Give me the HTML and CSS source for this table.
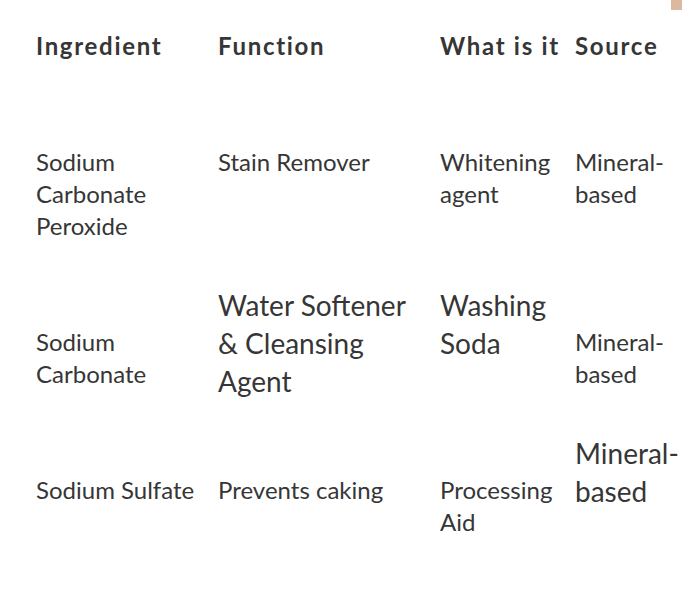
FILE: index.html
```html
<!DOCTYPE html>
<html lang="en">
<head>
<meta charset="utf-8">
<title>Ingredients</title>
<link rel="stylesheet" href="styles.css">
</head>
<body>
<div class="corner"></div>
<div class="table">
  <div class="row head">
    <div class="cell">Ingredient</div>
    <div class="cell">Function</div>
    <div class="cell">What is it</div>
    <div class="cell">Source</div>
  </div>
  <div class="row r1">
    <div class="cell">Sodium Carbonate Peroxide</div>
    <div class="cell">Stain Remover</div>
    <div class="cell">Whitening agent</div>
    <div class="cell">Mineral-based</div>
  </div>
  <div class="row r2">
    <div class="cell drop">Sodium Carbonate</div>
    <div class="cell big">Water Softener &amp; Cleansing Agent</div>
    <div class="cell big">Washing Soda</div>
    <div class="cell drop">Mineral-based</div>
  </div>
  <div class="row r3">
    <div class="cell drop">Sodium Sulfate</div>
    <div class="cell drop">Prevents caking</div>
    <div class="cell drop">Processing Aid</div>
    <div class="cell big">Mineral-based</div>
  </div>
</div>
</body>
</html>
```
FILE: styles.css
```css
html, body {
  margin: 0;
  padding: 0;
  background: #ffffff;
}
body {
  font-family: Lato, "Open Sans", sans-serif;
  color: #363636;
  width: 682px;
  overflow: hidden;
}
.corner {
  position: absolute;
  top: 0;
  right: 0;
  width: 11px;
  height: 10px;
  background: #dcb99e;
}
.table {
  padding-left: 36px;
}
.row {
  display: grid;
  grid-template-columns: 182px 222px 135px 109px;
  align-items: start;
  font-size: 24px;
  line-height: 32px;
}
.cell {
  padding-right: 14px;
}
.cell:nth-child(2) {
  padding-right: 24px;
}
.cell:nth-child(4) {
  padding-right: 0;
}
.head {
  padding-top: 30px;
  font-weight: 700;
  letter-spacing: 1.7px;
}
.head .cell {
  white-space: nowrap;
}
.r1 {
  margin-top: 84px;
}
.r2 {
  margin-top: 44px;
}
.r3 {
  margin-top: 34px;
}
.big {
  font-size: 28px;
  line-height: 38px;
}
.drop {
  margin-top: 40px;
}
```
